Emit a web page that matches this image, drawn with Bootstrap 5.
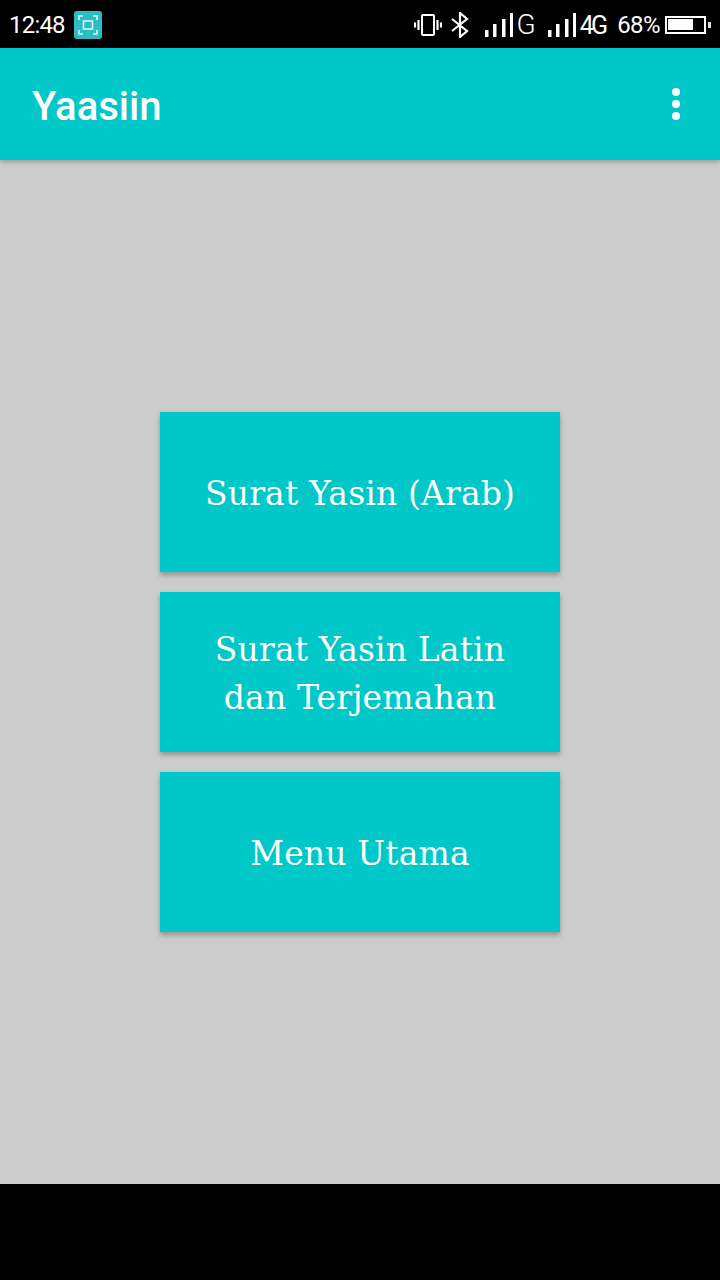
<!DOCTYPE html>
<html lang="id">
<head>
<meta charset="utf-8">
<title>Yaasiin</title>
<link href="https://cdn.jsdelivr.net/npm/bootstrap@5.3.0/dist/css/bootstrap.min.css" rel="stylesheet">
<style>
html,body{margin:0;height:1280px;background:#000;overflow:hidden}
.screen{width:720px;height:1280px}
.sbar{height:48px;background:#000;color:#fff;font-family:"Roboto",sans-serif;font-weight:300;padding:2px 8px 0 9px;line-height:1}
.clock{font-size:24px;font-weight:400;letter-spacing:-.8px}
.shot{width:28px;height:28px;background:#2cbcc4;border-radius:3px;margin-left:9px;margin-top:-1px}
.ic-bt{margin-left:8px}
.ic-s1{margin-left:15px}
.ic-g{font-size:28px;margin-left:4px}
.ic-s2{margin-left:12px}
.ic-4g{font-size:25px;font-weight:400;letter-spacing:-2.8px;margin-left:4px}
.ic-pct{font-size:24px;font-weight:400;margin-left:12px;letter-spacing:-.6px}
.ic-bat{margin-left:5px}
.appbar{height:112px;background:#00c8c8;padding:0 32px;box-shadow:0 2px 5px rgba(0,0,0,.25);position:relative;z-index:1}
.apptitle{font-family:"Roboto",sans-serif;font-weight:500;font-size:40px;color:#fff;line-height:1;margin:6px 0 0}
.dots{gap:4px;margin-right:8px}
.dot{width:8px;height:8px;border-radius:50%;background:#fff}
.bodyarea{height:1024px;background:#cdcccd;gap:20px}
.mbtn{width:400px;height:160px;background:#00c8c8;color:#fff;border:0;border-radius:0;padding:4px 20px 0;font-family:"DejaVu Serif",serif;font-size:33px;line-height:48px;letter-spacing:.15px;box-shadow:0 3px 5px rgba(0,0,0,.28)}
.mbtn:hover,.mbtn:active{background:#00c8c8;color:#fff}
.bottombar{height:96px;background:#000}
</style>
</head>
<body>
<div class="screen d-flex flex-column">
  <div class="sbar d-flex align-items-center justify-content-between">
    <div class="d-flex align-items-center">
      <span class="clock">12:48</span>
      <span class="shot d-flex align-items-center justify-content-center">
        <svg width="20" height="20" viewBox="0 0 20 20" fill="none" stroke="#d8f6f6" stroke-width="1.6"><path d="M1 5V1h4M15 1h4v4M19 15v4h-4M5 19H1v-4"/><rect x="5.500" y="6" width="9" height="8"/></svg>
      </span>
    </div>
    <div class="d-flex align-items-center">
      <svg width="28" height="22" viewBox="0 0 28 22" fill="none" stroke="#fff"><rect x="8" y="1" width="12" height="20" rx="1" stroke-width="2"/><path d="M4.500 6v10M1 8.500v5M23.500 6v10M27 8.500v5" stroke-width="2.200"/></svg>
      <svg class="ic-bt" width="20" height="26" viewBox="0 0 20 26" fill="none" stroke="#fff" stroke-width="2.200"><path d="M2 7l15 12-7 6V1l7 6L2 19"/></svg>
      <svg class="ic-s1" width="28" height="24" viewBox="0 0 28 24" fill="#fff"><rect x="0" y="17" width="3.500" height="7"/><rect x="8" y="11" width="3.500" height="13"/><rect x="17" y="6" width="3.500" height="18"/><rect x="25" y="0" width="3" height="24"/></svg>
      <span class="ic-g">G</span>
      <svg class="ic-s2" width="28" height="24" viewBox="0 0 28 24" fill="#fff"><rect x="0" y="17" width="3.500" height="7"/><rect x="8" y="11" width="3.500" height="13"/><rect x="17" y="6" width="3.500" height="18"/><rect x="25" y="0" width="3" height="24"/></svg>
      <span class="ic-4g">4G</span>
      <span class="ic-pct">68%</span>
      <svg class="ic-bat" width="47" height="18" viewBox="0 0 47 18"><rect x="1" y="1" width="39" height="16" fill="none" stroke="#fff" stroke-width="2"/><rect x="3" y="3" width="25" height="11" fill="#fff"/><rect x="43" y="6" width="3" height="6" fill="#ddd"/></svg>
    </div>
  </div>
  <div class="appbar d-flex align-items-center justify-content-between">
    <h1 class="apptitle">Yaasiin</h1>
    <div class="dots d-flex flex-column"><span class="dot"></span><span class="dot"></span><span class="dot"></span></div>
  </div>
  <div class="bodyarea d-flex flex-column align-items-center justify-content-center">
    <button class="btn mbtn" type="button">Surat Yasin (Arab)</button>
    <button class="btn mbtn" type="button">Surat Yasin Latin<br>dan Terjemahan</button>
    <button class="btn mbtn" type="button">Menu Utama</button>
  </div>
  <div class="bottombar"></div>
</div>
<script src="https://cdn.jsdelivr.net/npm/bootstrap@5.3.0/dist/js/bootstrap.bundle.min.js"></script>
</body>
</html>
